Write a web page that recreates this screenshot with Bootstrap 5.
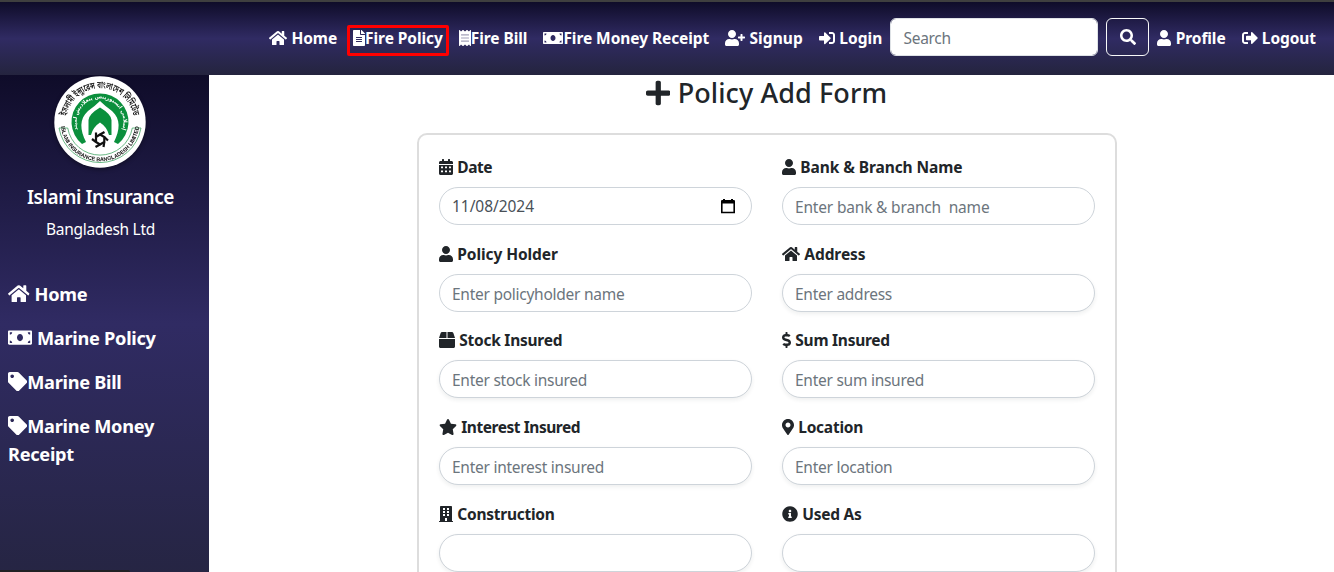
<!DOCTYPE html>
<html lang="en">
<head>
<meta charset="utf-8">
<meta name="viewport" content="width=device-width, initial-scale=1">
<title>Policy Add Form</title>
<link href="https://cdn.jsdelivr.net/npm/bootstrap@5.3.0/dist/css/bootstrap.min.css" rel="stylesheet">
<style>
  body { font-family: "Noto Sans", "Open Sans", sans-serif; height: 100vh; overflow: hidden; background: #fff; }
  .ico { height: 1em; fill: currentColor; vertical-align: -.125em; }
  .topbar { height: 75px; border-top: 2px solid #3f3f3f; background: linear-gradient(#0f0c29, #302b63, #24243e); padding: 0 10px 1px; }
  .topbar .nav-link { color: #fff; font-weight: 700; padding: 8px; white-space: nowrap; font-size: 16px; }
  .topbar .nav-link span { font-size: 15.5px; letter-spacing: -.07px; }
  .topbar .nav-link span.ls-wide { letter-spacing: .1px; }
  .marked-box { position: absolute; inset: 7px 2px 2px; border: 3px solid #f00; border-radius: 2px; }
  .search-form { margin-bottom: 2px; }
  .search-input { width: 208px; height: 38px; font-size: 15.5px; letter-spacing: -.3px; padding-top: 8px; }
  .search-btn { width: 43px; height: 38px; padding: 0; font-size: 16px; }
  .search-btn .ico { vertical-align: -2px; }
  .side { width: 209px; background: linear-gradient(#0f0c29, #302b63 50%, #24243e 108%); color: #fff; }
  .side .brand-logo { width: 92px; height: 92px; margin: 1px 0 0 54px; filter: drop-shadow(0 2px 2px rgba(0,0,0,.35)); }
  .side h5 { font-size: 19px; font-weight: 600; letter-spacing: -.42px; line-height: 24px; margin: 17px 8px 8px 0; }
  .side p { font-size: 15.5px; letter-spacing: -.3px; line-height: 24px; margin: 0 8px 31px 0; }
  .side .nav-link { color: #fff; font-weight: 700; font-size: 19.2px; line-height: 28px; padding: 8px; }
  .side .nav-link span { font-size: 18.2px; letter-spacing: -.28px; }
  .page-title { font-size: 28px; font-weight: 500; line-height: 34px; margin: 0 0 23px; color: #212529; }
  .page-title span { font-size: 27px; letter-spacing: .1px; }
  .main-area { padding-right: 10px; }
  .form-box { width: 700px; border: 2px solid #ddd; border-radius: 10px; padding: 20px; }
  .form-box .row { --bs-gutter-x: 30px; }
  .form-box .form-label { display: block; font-weight: 700; line-height: 24px; height: 24px; margin-bottom: 8px; font-size: 16px; }
  .form-box .form-label span { font-size: 15.5px; margin-left: .6px; }
  .form-box .form-control { height: 38px; border-radius: 20px; font-size: 15.5px; letter-spacing: -.26px; border-color: #ced4da; padding: 8px 12px 6px 12.5px; }
  .form-box .form-control::placeholder, .search-input::placeholder { color: #6c757d; }
  .form-box .form-control.ls-bank { letter-spacing: -.18px; }
  .field { margin-bottom: 16.65px; }
  .ls-a { letter-spacing: -.08px; }
  .ls-b { letter-spacing: -.25px; }
  .ls-c { letter-spacing: -.45px; }
  .form-box .date-value { color: #495057; }
  .form-box .date-value span { letter-spacing: -.05px; }
  .date-value svg { margin: -2px 2.5px 0 0; }
  .status-edge { position: absolute; left: 0; bottom: 0; width: 130px; height: 2px; background: #202124; border-top-right-radius: 3px; }
</style>
</head>
<body class="d-flex flex-column">
<svg class="d-none">
  <symbol id="home" viewBox="0 0 576 512"><path d="M280.37 148.26L96 300.11V464a16 16 0 0 0 16 16l112.06-.29a16 16 0 0 0 15.92-16V368a16 16 0 0 1 16-16h64a16 16 0 0 1 16 16v95.64a16 16 0 0 0 16 16.05L464 480a16 16 0 0 0 16-16V300L295.67 148.26a12.19 12.19 0 0 0-15.3 0zM571.6 251.47L488 182.56V44.05a12 12 0 0 0-12-12h-56a12 12 0 0 0-12 12v72.61L318.47 43a48 48 0 0 0-61 0L4.34 251.47a12 12 0 0 0-1.6 16.9l25.5 31A12 12 0 0 0 45.15 301l235.22-193.74a12.19 12.19 0 0 1 15.3 0L530.9 301a12 12 0 0 0 16.9-1.6l25.5-31a12 12 0 0 0-1.7-16.93z"/></symbol>
  <symbol id="file" viewBox="0 0 384 512"><path d="M224 136V0H24C10.7 0 0 10.7 0 24v464c0 13.3 10.7 24 24 24h336c13.3 0 24-10.7 24-24V160H248c-13.2 0-24-10.8-24-24zm64 236c0 6.6-5.4 12-12 12H108c-6.6 0-12-5.4-12-12v-8c0-6.6 5.4-12 12-12h168c6.6 0 12 5.4 12 12v8zm0-64c0 6.6-5.4 12-12 12H108c-6.6 0-12-5.4-12-12v-8c0-6.6 5.4-12 12-12h168c6.6 0 12 5.4 12 12v8zm0-72v8c0 6.6-5.4 12-12 12H108c-6.6 0-12-5.4-12-12v-8c0-6.6 5.4-12 12-12h168c6.6 0 12 5.4 12 12zm96-114.1v6.1H256V0h6.1c6.4 0 12.5 2.5 17 7l97.9 98c4.5 4.5 7 10.6 7 16.9z"/></symbol>
  <symbol id="receipt" viewBox="0 0 384 512"><path fill-rule="evenodd" d="M358.4 3.2L320 48 265.6 3.2a15.9 15.9 0 0 0-19.2 0L192 48 137.6 3.2a15.9 15.9 0 0 0-19.2 0L64 48 25.6 3.2C15-4.7 0 2.8 0 16v480c0 13.2 15 20.7 25.6 12.8L64 464l54.4 44.8a15.9 15.9 0 0 0 19.2 0L192 464l54.4 44.8a15.9 15.9 0 0 0 19.2 0L320 464l38.4 44.8c10.5 7.9 25.6.4 25.6-12.8V16c0-13.2-15-20.7-25.6-12.8zM72 144h240a8 8 0 0 1 8 8v16a8 8 0 0 1-8 8H72a8 8 0 0 1-8-8v-16a8 8 0 0 1 8-8zM72 240h240a8 8 0 0 1 8 8v16a8 8 0 0 1-8 8H72a8 8 0 0 1-8-8v-16a8 8 0 0 1 8-8zM72 336h240a8 8 0 0 1 8 8v16a8 8 0 0 1-8 8H72a8 8 0 0 1-8-8v-16a8 8 0 0 1 8-8z"/><path opacity=".55" d="M60 140h264v232H60z"/></symbol>
  <symbol id="money" viewBox="0 0 640 512"><path d="M608 64H32C14.33 64 0 78.33 0 96v320c0 17.67 14.33 32 32 32h576c17.67 0 32-14.33 32-32V96c0-17.67-14.33-32-32-32zM48 400v-64c35.35 0 64 28.65 64 64H48zm0-224v-64h64c0 35.35-28.65 64-64 64zm272 176c-44.19 0-80-42.99-80-96 0-53.02 35.82-96 80-96s80 42.98 80 96c0 53.03-35.83 96-80 96zm272 48h-64c0-35.35 28.65-64 64-64v64zm0-224c-35.35 0-64-28.65-64-64h64v64z"/></symbol>
  <symbol id="userplus" viewBox="0 0 640 512"><path d="M624 208h-64v-64c0-8.8-7.2-16-16-16h-32c-8.8 0-16 7.2-16 16v64h-64c-8.8 0-16 7.2-16 16v32c0 8.8 7.2 16 16 16h64v64c0 8.8 7.2 16 16 16h32c8.8 0 16-7.2 16-16v-64h64c8.8 0 16-7.2 16-16v-32c0-8.8-7.2-16-16-16zm-400 48c70.7 0 128-57.3 128-128S294.7 0 224 0 96 57.3 96 128s57.3 128 128 128zm89.6 32h-16.7c-22.2 10.2-46.9 16-72.9 16s-50.6-5.8-72.9-16h-16.7C60.2 288 0 348.2 0 422.4V464c0 26.5 21.5 48 48 48h352c26.5 0 48-21.5 48-48v-41.6c0-74.2-60.2-134.4-134.4-134.4z"/></symbol>
  <symbol id="user" viewBox="0 0 448 512"><path d="M224 256c70.7 0 128-57.3 128-128S294.7 0 224 0 96 57.3 96 128s57.3 128 128 128zm89.6 32h-16.7c-22.2 10.2-46.9 16-72.9 16s-50.6-5.8-72.9-16h-16.7C60.2 288 0 348.2 0 422.4V464c0 26.5 21.5 48 48 48h352c26.5 0 48-21.5 48-48v-41.6c0-74.2-60.2-134.4-134.4-134.4z"/></symbol>
  <symbol id="signin" viewBox="0 0 512 512"><path d="M416 448h-84c-6.6 0-12-5.4-12-12v-40c0-6.6 5.4-12 12-12h84c17.7 0 32-14.3 32-32V160c0-17.7-14.3-32-32-32h-84c-6.6 0-12-5.4-12-12V76c0-6.6 5.4-12 12-12h84c53 0 96 43 96 96v192c0 53-43 96-96 96zm-47-201L201 79c-15-15-41-4.5-41 17v96H24c-13.3 0-24 10.7-24 24v96c0 13.3 10.7 24 24 24h136v96c0 21.5 26 32 41 17l168-168c9.3-9.4 9.3-24.6 0-34z"/></symbol>
  <symbol id="signout" viewBox="0 0 512 512"><path d="M497 273L329 441c-15 15-41 4.5-41-17v-96H152c-13.3 0-24-10.7-24-24v-96c0-13.3 10.7-24 24-24h136V88c0-21.4 25.9-32 41-17l168 168c9.3 9.4 9.3 24.6 0 34zM192 436v-40c0-6.6-5.4-12-12-12H96c-17.7 0-32-14.3-32-32V160c0-17.7 14.3-32 32-32h84c6.6 0 12-5.4 12-12V76c0-6.6-5.4-12-12-12H96c-53 0-96 43-96 96v192c0 53 43 96 96 96h84c6.6 0 12-5.4 12-12z"/></symbol>
  <symbol id="search" viewBox="0 0 512 512"><path d="M505 442.7L405.3 343c-4.5-4.5-10.6-7-17-7H372c27.6-35.3 44-79.7 44-128C416 93.1 322.9 0 208 0S0 93.1 0 208s93.1 208 208 208c48.3 0 92.7-16.4 128-44v16.3c0 6.4 2.5 12.5 7 17l99.7 99.7c9.4 9.4 24.6 9.4 33.9 0l28.3-28.3c9.4-9.4 9.4-24.6.1-34zM208 336c-70.7 0-128-57.2-128-128 0-70.7 57.2-128 128-128 70.7 0 128 57.2 128 128 0 70.7-57.2 128-128 128z"/></symbol>
  <symbol id="plus" viewBox="0 0 448 512"><path d="M416 208H272V64c0-17.67-14.33-32-32-32h-32c-17.67 0-32 14.33-32 32v144H32c-17.67 0-32 14.33-32 32v32c0 17.67 14.33 32 32 32h144v144c0 17.67 14.33 32 32 32h32c17.67 0 32-14.33 32-32V304h144c17.67 0 32-14.33 32-32v-32c0-17.67-14.33-32-32-32z"/></symbol>
  <symbol id="calendar" viewBox="0 0 448 512"><path fill-rule="evenodd" d="M400 64h-48V16c0-8.8-7.2-16-16-16h-32c-8.8 0-16 7.2-16 16v48H160V16c0-8.8-7.2-16-16-16h-32c-8.8 0-16 7.2-16 16v48H48C21.5 64 0 85.5 0 112v48h448v-48c0-26.5-21.5-48-48-48zM0 192v272c0 26.5 21.5 48 48 48h352c26.5 0 48-21.5 48-48V192zM64 236h64v60H64zM192 236h64v60h-64zM320 236h64v60h-64zM64 364h64v60H64zM192 364h64v60h-64zM320 364h64v60h-64z"/></symbol>
  <symbol id="tag" viewBox="0 0 512 512"><path d="M0 252.118V48C0 21.49 21.49 0 48 0h204.118a48 48 0 0 1 33.941 14.059l211.882 211.882c18.745 18.745 18.745 49.137 0 67.882L293.823 497.941c-18.745 18.745-49.137 18.745-67.882 0L14.059 286.059A48 48 0 0 1 0 252.118zM112 64c-26.51 0-48 21.49-48 48s21.49 48 48 48 48-21.49 48-48-21.49-48-48-48z"/></symbol>
  <symbol id="box" viewBox="0 0 512 512"><path d="M509.5 184.6L458.9 32.8C452.4 13.2 434.1 0 413.4 0H272v192h238.7c-.4-2.5-.4-5-1.2-7.4zM240 0H98.6c-20.7 0-39 13.2-45.5 32.8L2.5 184.6c-.8 2.4-.8 4.9-1.2 7.4H240V0zM0 224v240c0 26.5 21.5 48 48 48h416c26.5 0 48-21.5 48-48V224H0z"/></symbol>
  <symbol id="star" viewBox="0 0 576 512"><path d="M259.3 17.8L194 150.2 47.9 171.5c-26.2 3.8-36.7 36.1-17.7 54.6l105.7 103-25 145.5c-4.5 26.3 23.2 46 46.4 33.7L288 439.6l130.7 68.7c23.2 12.2 50.9-7.4 46.4-33.7l-25-145.5 105.7-103c19-18.5 8.5-50.8-17.7-54.6L382 150.2 316.7 17.8c-11.7-23.6-45.6-23.9-57.4 0z"/></symbol>
  <symbol id="pin" viewBox="0 0 384 512"><path d="M172.268 501.67C26.97 291.031 0 269.413 0 192 0 85.961 85.961 0 192 0s192 85.961 192 192c0 77.413-26.97 99.031-172.268 309.67-9.535 13.774-29.93 13.773-39.464 0zM192 272c44.183 0 80-35.817 80-80s-35.817-80-80-80-80 35.817-80 80 35.817 80 80 80z"/></symbol>
  <symbol id="info" viewBox="0 0 512 512"><path d="M256 8C119.043 8 8 119.083 8 256c0 136.997 111.043 248 248 248s248-111.003 248-248C504 119.083 392.957 8 256 8zm0 110c23.196 0 42 18.804 42 42s-18.804 42-42 42-42-18.804-42-42 18.804-42 42-42zm56 254c0 6.627-5.373 12-12 12h-88c-6.627 0-12-5.373-12-12v-24c0-6.627 5.373-12 12-12h12v-64h-12c-6.627 0-12-5.373-12-12v-24c0-6.627 5.373-12 12-12h64c6.627 0 12 5.373 12 12v100h12c6.627 0 12 5.373 12 12v24z"/></symbol>
  <symbol id="dollar" viewBox="0 0 288 512"><path d="M209.2 233.4l-108-31.6C88.7 198.2 80 186.5 80 173.5c0-16.3 13.2-29.5 29.5-29.5h66.3c12.2 0 24.2 3.7 34.2 10.5 6.1 4.1 14.3 3.1 19.5-2l34.8-34c7.1-6.9 6.1-18.4-1.8-24.5C238 74.8 207.4 64.1 176 64V16c0-8.8-7.2-16-16-16h-32c-8.8 0-16 7.2-16 16v48h-2.5C45.8 64-5.4 118.7.5 183.6c4.2 46.1 39.4 83.6 83.8 96.6l102.5 30c12.5 3.7 21.2 15.3 21.2 28.3 0 16.3-13.2 29.5-29.5 29.5h-66.3C100 368 88 364.3 78 357.5c-6.1-4.1-14.3-3.1-19.5 2l-34.8 34c-7.1 6.9-6.1 18.4 1.8 24.5 24.5 19.2 55.1 29.9 86.5 30v48c0 8.8 7.2 16 16 16h32c8.8 0 16-7.2 16-16v-48.2c46.6-.9 90.3-28.6 105.7-72.7 21.5-61.6-14.6-124.8-72.5-141.7z"/></symbol>
  <symbol id="building" viewBox="0 0 448 512"><path fill-rule="evenodd" d="M436 480h-20V24c0-13.255-10.745-24-24-24H56C42.745 0 32 10.745 32 24v456H12c-6.627 0-12 5.373-12 12v20h448v-20c0-6.627-5.373-12-12-12zM128 64h64v64h-64zM256 64h64v64h-64zM128 160h64v64h-64zM256 160h64v64h-64zM128 256h64v64h-64zM256 256h64v64h-64zM192 384h64v96h-64z"/></symbol>
  <symbol id="datepick" viewBox="0 0 16 16"><path fill-rule="evenodd" d="M3 1h2v1h6V1h2v1h1.2L15 2.8V15.2H1V2.8L1.8 2H3zM2.6 5.5v8.2h10.8V5.5z"/></symbol>
</svg>

<nav class="topbar navbar flex-nowrap justify-content-end flex-shrink-0">
  <div class="d-flex align-items-center">
    <a class="nav-link" href="#"><svg class="ico" width="18"><use href="#home"/></svg> <span>Home</span></a>
    <a class="nav-link position-relative" href="#"><svg class="ico" width="12"><use href="#file"/></svg><span>Fire Policy</span><i class="marked-box"></i></a>
    <a class="nav-link" href="#"><svg class="ico" width="12"><use href="#receipt"/></svg><span>Fire Bill</span></a>
    <a class="nav-link" href="#"><svg class="ico" width="20"><use href="#money"/></svg><span>Fire Money Receipt</span></a>
    <a class="nav-link" href="#"><svg class="ico" width="20"><use href="#userplus"/></svg> <span class="ls-wide">Signup</span></a>
    <a class="nav-link" href="#"><svg class="ico" width="16"><use href="#signin"/></svg> <span class="ls-wide">Login</span></a>
    <form class="search-form d-flex gap-2">
      <input class="form-control search-input" type="search" placeholder="Search">
      <button class="btn btn-outline-light search-btn text-white" type="button"><svg class="ico" width="16"><use href="#search"/></svg></button>
    </form>
    <a class="nav-link" href="#"><svg class="ico" width="14"><use href="#user"/></svg> <span>Profile</span></a>
    <a class="nav-link" href="#"><svg class="ico" width="16"><use href="#signout"/></svg> <span>Logout</span></a>
  </div>
</nav>

<div class="d-flex flex-grow-1 overflow-hidden">
  <aside class="side flex-shrink-0 position-relative">
    <svg class="brand-logo d-block" viewBox="-46 -46 92 92">
      <defs>
        <path id="arcTop" d="M-33.1 8A34 34 0 1 1 33.1 8"/>
        <path id="arcBottom" d="M-38 -10A39.3 39.3 0 1 0 38 -10"/>
        <path id="arcMid" d="M-19.5 13A23.5 23.5 0 1 1 19.5 13"/>
      </defs>
      <circle r="45.7" fill="#fff"/>
      <path d="M-41 6H-32.3A32.8 32.8 0 0 0 32.3 6H41A41.6 41.6 0 0 1-41 6z" fill="#fff" stroke="#2a9a50" stroke-width=".7"/>
      <path d="M-18 22A28.5 28.5 0 1 1 18 22L14 20C20 8 21-3 12-11Q5-16 0-21Q-5-16-12-11C-21-3-20 8-14 20z" fill="#0a8f3c"/>
      <path d="M-11.5 13V-2Q-11-8 0-14.5Q11-8 11.5-2V13H9Q7 5 0 .5Q-7 5-9 13z" fill="#0a8f3c"/>
      <g fill="none" stroke="#111" stroke-width="2.2" stroke-linejoin="round" transform="translate(0 17.5)">
        <path d="M-4-2.500L0-5 4.300-2.500 4.300 2.500 0 5-4 2.500z"/>
        <path d="M0-5L4.500-7.500M4.300-2.500L8 1M4.300 2.500L3.500 7.500M0 5L-4.500 7.500M-4 2.500L-8-.5M-4-2.500L-4-7"/>
      </g>
      <text font-size="9.6" font-weight="600" fill="#111" font-family="Noto Sans Bengali, Noto Sans, sans-serif"><textPath href="#arcTop" startOffset="50%" text-anchor="middle" textLength="94" lengthAdjust="spacingAndGlyphs">ইসলামী ইন্স্যুরেন্স বাংলাদেশ লিমিটেড</textPath></text>
      <text font-size="5.2" fill="#fff" font-weight="700" font-family="DejaVu Sans, sans-serif"><textPath href="#arcMid" startOffset="50%" text-anchor="middle">إسلامي انسيورينس بنغلاديش لميتد</textPath></text>
      <text font-size="5.6" font-weight="700" fill="#111" font-family="Liberation Sans, sans-serif"><textPath href="#arcBottom" startOffset="50%" text-anchor="middle" textLength="114" lengthAdjust="spacingAndGlyphs">ISLAMI INSURANCE BANGLADESH LIMITED</textPath></text>
    </svg>
    <h5 class="text-center">Islami Insurance</h5>
    <p class="text-center">Bangladesh Ltd</p>
    <nav class="nav flex-column">
      <a class="nav-link" href="#"><svg class="ico" width="21.6"><use href="#home"/></svg> <span>Home</span></a>
      <a class="nav-link" href="#"><svg class="ico" width="24"><use href="#money"/></svg> <span>Marine Policy</span></a>
      <a class="nav-link" href="#"><svg class="ico" width="19.2"><use href="#tag"/></svg><span>Marine Bill</span></a>
      <a class="nav-link" href="#"><svg class="ico" width="19.2"><use href="#tag"/></svg><span>Marine Money<br>Receipt</span></a>
    </nav>
    <div class="status-edge"></div>
  </aside>

  <main class="main-area flex-grow-1 d-flex flex-column align-items-center overflow-hidden">
    <h2 class="page-title"><svg class="ico" width="24.5"><use href="#plus"/></svg> <span>Policy Add Form</span></h2>
    <form class="form-box flex-shrink-0">
      <div class="row">
        <div class="col-6 field">
          <label class="form-label"><svg class="ico" width="14"><use href="#calendar"/></svg> <span class="ls-c">Date</span></label>
          <div class="form-control date-value d-flex align-items-center justify-content-between"><span>11/08/2024</span><svg width="16" height="16" class="text-black"><use href="#datepick"/></svg></div>
        </div>
        <div class="col-6 field">
          <label class="form-label"><svg class="ico" width="14"><use href="#user"/></svg> <span class="ls-a">Bank &amp; Branch Name</span></label>
          <input class="form-control ls-bank" placeholder="Enter bank &amp; branch  name">
        </div>
        <div class="col-6 field">
          <label class="form-label"><svg class="ico" width="14"><use href="#user"/></svg> <span class="ls-a">Policy Holder</span></label>
          <input class="form-control" placeholder="Enter policyholder name">
        </div>
        <div class="col-6 field">
          <label class="form-label"><svg class="ico" width="18"><use href="#home"/></svg> <span class="ls-a">Address</span></label>
          <input class="form-control shadow-sm" placeholder="Enter address">
        </div>
        <div class="col-6 field">
          <label class="form-label"><svg class="ico" width="16"><use href="#box"/></svg> <span class="ls-b">Stock Insured</span></label>
          <input class="form-control shadow-sm" placeholder="Enter stock insured">
        </div>
        <div class="col-6 field">
          <label class="form-label"><svg class="ico" width="9"><use href="#dollar"/></svg> <span class="ls-b">Sum Insured</span></label>
          <input class="form-control shadow-sm" placeholder="Enter sum insured">
        </div>
        <div class="col-6 field">
          <label class="form-label"><svg class="ico" width="18"><use href="#star"/></svg> <span class="ls-c">Interest Insured</span></label>
          <input class="form-control shadow-sm" placeholder="Enter interest insured">
        </div>
        <div class="col-6 field">
          <label class="form-label"><svg class="ico" width="12"><use href="#pin"/></svg> <span class="ls-b">Location</span></label>
          <input class="form-control shadow-sm" placeholder="Enter location">
        </div>
        <div class="col-6 field">
          <label class="form-label"><svg class="ico" width="14"><use href="#building"/></svg> <span class="ls-b">Construction</span></label>
          <input class="form-control shadow-sm">
        </div>
        <div class="col-6 field">
          <label class="form-label"><svg class="ico" width="16"><use href="#info"/></svg> <span class="ls-b">Used As</span></label>
          <input class="form-control shadow-sm">
        </div>
      </div>
    </form>
  </main>
</div>
<script src="https://cdn.jsdelivr.net/npm/bootstrap@5.3.0/dist/js/bootstrap.bundle.min.js"></script>
</body>
</html>
